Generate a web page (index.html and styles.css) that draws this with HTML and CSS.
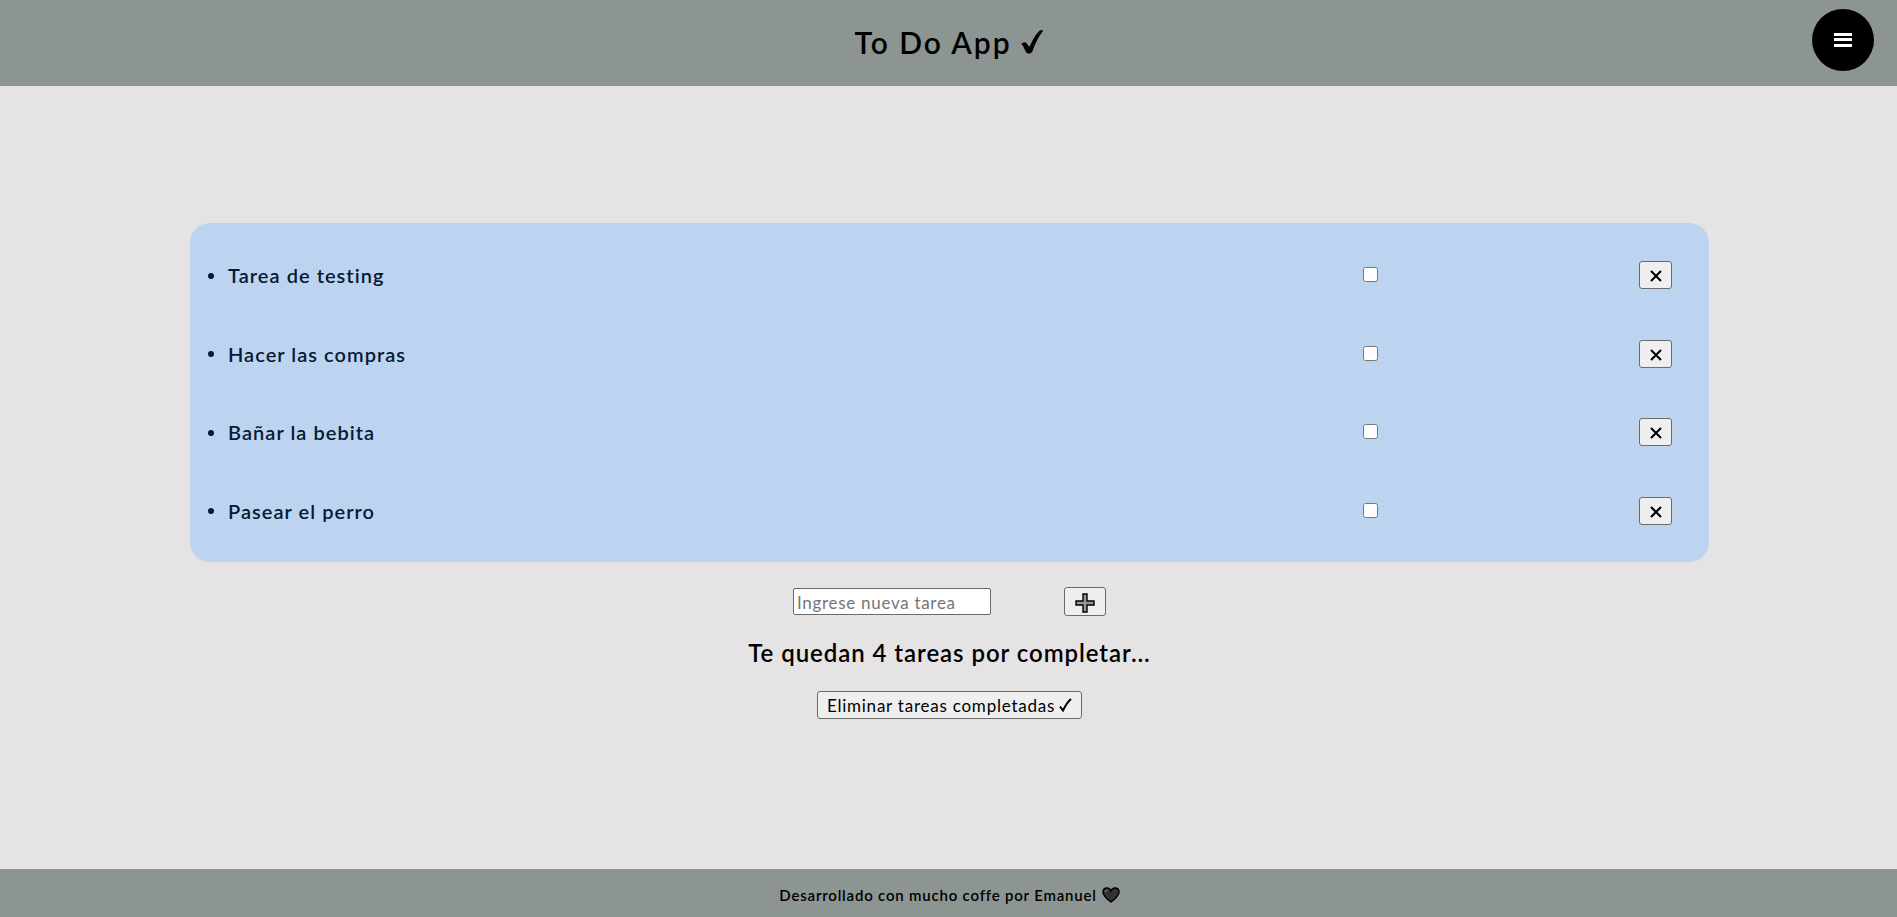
FILE: index.html
```
<!DOCTYPE html>
<html lang="es">
<head>
<meta charset="utf-8">
<title>To Do App</title>
<link rel="stylesheet" href="styles.css">
</head>
<body>
<header class="header">
  <h1 class="title"><span class="title-text">To Do App</span><svg class="title-check" viewBox="0 0 22 24"><path d="M0 14Q3.500 11 5.500 13.200L8.500 17Q13 6 18.500 0.800Q22.500-.8 21.800 1.200Q15.500 9 11.200 22Q8 25 5.200 22.500L2.800 17.500Q2 15 0 14Z"/></svg></h1>
  <button class="menu" aria-label="Menú"><span class="bar"></span><span class="bar"></span><span class="bar"></span></button>
</header>
<main class="main">
  <ul class="tasks">
    <li class="task"><span class="dot"></span><span class="name">Tarea de testing</span><input class="check" type="checkbox"><button class="btn remove" aria-label="Quitar"><svg class="cross" viewBox="0 0 12 12"><path d="M1 1L11 11M11 1L1 11"/></svg></button></li>
    <li class="task"><span class="dot"></span><span class="name">Hacer las compras</span><input class="check" type="checkbox"><button class="btn remove" aria-label="Quitar"><svg class="cross" viewBox="0 0 12 12"><path d="M1 1L11 11M11 1L1 11"/></svg></button></li>
    <li class="task"><span class="dot"></span><span class="name">Bañar la bebita</span><input class="check" type="checkbox"><button class="btn remove" aria-label="Quitar"><svg class="cross" viewBox="0 0 12 12"><path d="M1 1L11 11M11 1L1 11"/></svg></button></li>
    <li class="task"><span class="dot"></span><span class="name">Pasear el perro</span><input class="check" type="checkbox"><button class="btn remove" aria-label="Quitar"><svg class="cross" viewBox="0 0 12 12"><path d="M1 1L11 11M11 1L1 11"/></svg></button></li>
  </ul>
  <div class="new-task">
    <input class="field" type="text" placeholder="Ingrese nueva tarea">
    <button class="btn add" aria-label="Agregar"><svg class="plus" viewBox="0 0 20 20"><path d="M8 1H12V8H19V12H12V19H8V12H1V8H8Z"/></svg></button>
  </div>
  <h2 class="count">Te quedan 4 tareas por completar...</h2>
  <button class="btn clear"><span class="clear-text">Eliminar tareas completadas</span><svg class="clear-check" viewBox="0 0 13 14"><path d="M1 8.500L4 12.500Q7.500 5 12 1" /></svg></button>
</main>
<footer class="footer"><span class="credit">Desarrollado con mucho coffe por Emanuel</span><svg class="heart" viewBox="0 0 18 16"><path class="heart-shape" d="M9 15Q1 9 1 5Q1 1 5 1Q8 1 9 4Q10 1 13 1Q17 1 17 5Q17 9 9 15Z"/><path class="heart-shine" d="M3.300 5Q3.600 3 5.500 3"/></svg></footer>
</body>
</html>
```
FILE: styles.css
```
* { box-sizing: border-box; }
body {
  margin: 0;
  height: 917px;
  display: flex;
  flex-direction: column;
  overflow: hidden;
  background: #e5e3e4;
  color: #000;
  font-family: Lato, "Noto Sans", sans-serif;
}
.header {
  height: 86px;
  flex: none;
  display: grid;
  grid-template-columns: 1fr auto 1fr;
  align-items: start;
  background: #8d9593;
}
.title {
  grid-column: 2;
  display: flex;
  gap: 9px;
  margin: 22px 0 0;
  font-size: 30px;
  line-height: 40px;
  font-weight: 600;
  white-space: nowrap;
}
.title-text { width: 157px; letter-spacing: 1.95px; }
.title-check { width: 22px; height: 24px; margin-top: 8px; }
.menu {
  justify-self: end;
  width: 62px;
  height: 62px;
  margin: 9px 23px 0 0;
  padding: 0 0 1px;
  border: 0;
  border-radius: 50%;
  background: #000;
  display: flex;
  flex-direction: column;
  align-items: center;
  justify-content: center;
  gap: 2.500px;
}
.bar { width: 18px; height: 3px; background: #fff; }
.main {
  flex: 1;
  display: flex;
  flex-direction: column;
  align-items: center;
  padding: 137px 0 0 2px;
}
.tasks {
  width: 1519px;
  height: 339px;
  margin: 0;
  padding: 13px 37px 12px 18px;
  list-style: none;
  border-radius: 20px;
  background: #bdd4f0;
  color: #061a33;
  display: grid;
  grid-template-rows: repeat(4, 1fr);
}
.task {
  display: grid;
  grid-template-columns: 20px 1135px 276px 33px;
  align-items: center;
}
.dot { width: 6px; height: 6px; border-radius: 50%; background: #061a33; margin-top: 1px; }
.name {
  font-size: 20px;
  line-height: 26px;
  font-weight: 600;
  letter-spacing: 1.04px;
  white-space: nowrap;
}
.check { width: 15px; height: 15px; margin: 0 0 1px; }
.btn {
  padding: 0;
  border: 1px solid #6b6b6b;
  border-radius: 3px;
  background: #efefef;
  color: #000;
  font-family: inherit;
  display: flex;
  align-items: center;
  justify-content: center;
}
.remove { width: 33px; height: 28px; padding-top: 2px; }
.cross { width: 12px; height: 12px; fill: none; stroke: #000; stroke-width: 2.1; }
.new-task { display: flex; align-items: center; gap: 73px; margin-top: 25px; }
.field {
  width: 198px;
  height: 27px;
  padding: 1px 3px 0;
  border: 1px solid #6b6b6b;
  border-radius: 2px;
  background: #fff;
  font-family: inherit;
  font-size: 17px;
  letter-spacing: 0.7px;
}
.field::placeholder { color: #757575; opacity: 1; }
.add { width: 42px; height: 29px; padding-top: 2px; }
.plus { width: 20px; height: 20px; fill: #999; stroke: #000; stroke-width: 1.4; }
.count {
  margin: 21px 0 0;
  font-size: 24px;
  line-height: 32px;
  font-weight: 600;
  letter-spacing: 0.94px;
  white-space: nowrap;
}
.clear { width: 265px; height: 28px; margin-top: 22px; gap: 4px; font-size: 17px; white-space: nowrap; }
.clear-text { letter-spacing: 0.77px; padding-top: 1px; }
.clear-check { width: 13px; height: 14px; fill: none; stroke: #000; stroke-width: 2; }
.footer {
  height: 48px;
  flex: none;
  display: flex;
  align-items: center;
  justify-content: center;
  gap: 5px;
  padding: 4px 0 0 2px;
  background: #8d9593;
  font-size: 15px;
  font-weight: 600;
  white-space: nowrap;
}
.credit { letter-spacing: 0.8px; margin-top: -1px; }
.heart { width: 18px; height: 16px; margin-top: -1px; }
.heart-shape { fill: #333; stroke: #000; stroke-width: 1.5; }
.heart-shine { fill: none; stroke: #8d9593; stroke-width: 1; }
```
